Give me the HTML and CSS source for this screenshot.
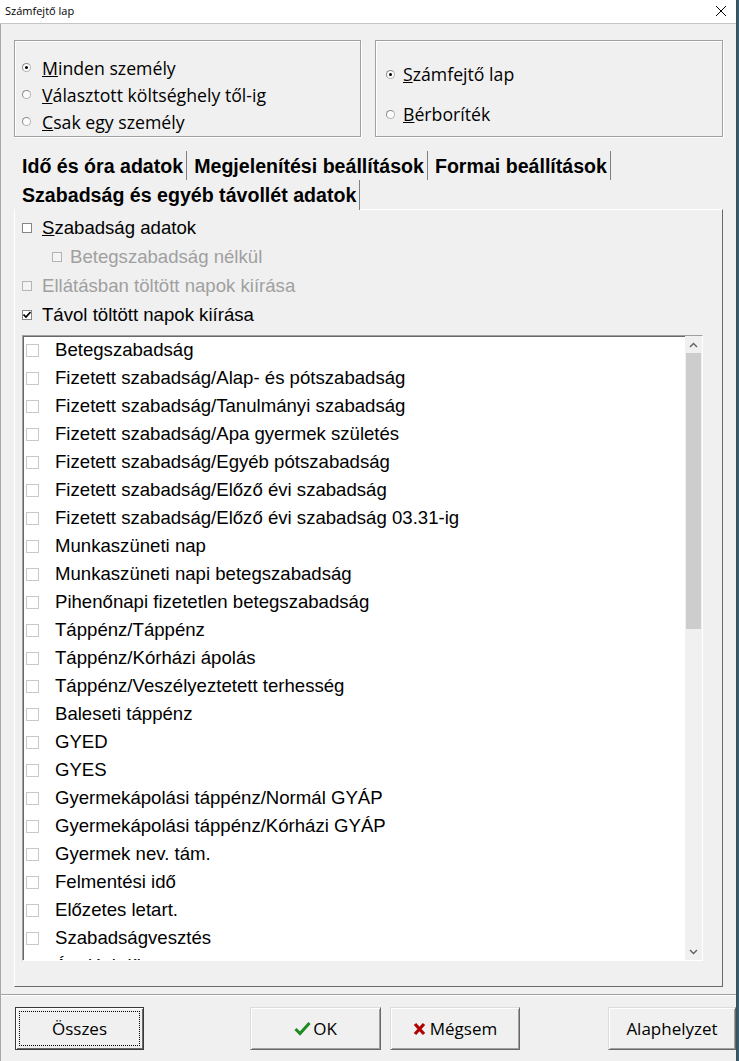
FILE: index.html
```html
<!DOCTYPE html>
<html lang="hu">
<head>
<meta charset="utf-8">
<title>Számfejtő lap</title>
<link rel="stylesheet" href="styles.css">
</head>
<body>
<div class="window">
  <div class="titlebar">
    <span class="title">Számfejtő lap</span>
    <svg class="close" width="12" height="12" viewBox="0 0 12 12"><path d="M1 1 L11 11 M11 1 L1 11" stroke="#000" stroke-width="1" fill="none"/></svg>
  </div>
  <div class="client">
    <div class="groups">
      <div class="group group-left">
        <div class="radio-row"><span class="radio checked"></span><span><u>M</u>inden személy</span></div>
        <div class="radio-row"><span class="radio"></span><span><u>V</u>álasztott költséghely től-ig</span></div>
        <div class="radio-row"><span class="radio"></span><span><u>C</u>sak egy személy</span></div>
      </div>
      <div class="group group-right">
        <div class="radio-row tall"><span class="radio checked"></span><span><u>S</u>zámfejtő lap</span></div>
        <div class="radio-row tall"><span class="radio"></span><span><u>B</u>érboríték</span></div>
      </div>
    </div>

    <div class="tabs">
      <div class="tab-row">
        <div class="tab first">Idő és óra adatok</div>
        <div class="tab">Megjelenítési beállítások</div>
        <div class="tab">Formai beállítások</div>
      </div>
      <div class="tab-row">
        <div class="tab first selected">Szabadság és egyéb távollét adatok</div>
      </div>
    </div>

    <div class="panel">
      <div class="check-row"><span class="cb"></span><span><u>S</u>zabadság adatok</span></div>
      <div class="check-row indent disabled"><span class="cb"></span><span>Betegszabadság nélkül</span></div>
      <div class="check-row disabled"><span class="cb"></span><span>Ellátásban töltött napok kiírása</span></div>
      <div class="check-row"><span class="cb"><svg width="8" height="8" viewBox="0 0 8 8"><path d="M0.5 3.5 L3 6 L7.5 1" stroke="#000" stroke-width="1.6" fill="none"/></svg></span><span>Távol töltött napok kiírása</span></div>

      <div class="listbox">
        <div class="items">
          <div class="item"><span class="lcb"></span>Betegszabadság</div>
          <div class="item"><span class="lcb"></span>Fizetett szabadság/Alap- és pótszabadság</div>
          <div class="item"><span class="lcb"></span>Fizetett szabadság/Tanulmányi szabadság</div>
          <div class="item"><span class="lcb"></span>Fizetett szabadság/Apa gyermek születés</div>
          <div class="item"><span class="lcb"></span>Fizetett szabadság/Egyéb pótszabadság</div>
          <div class="item"><span class="lcb"></span>Fizetett szabadság/Előző évi szabadság</div>
          <div class="item"><span class="lcb"></span>Fizetett szabadság/Előző évi szabadság 03.31-ig</div>
          <div class="item"><span class="lcb"></span>Munkaszüneti nap</div>
          <div class="item"><span class="lcb"></span>Munkaszüneti napi betegszabadság</div>
          <div class="item"><span class="lcb"></span>Pihenőnapi fizetetlen betegszabadság</div>
          <div class="item"><span class="lcb"></span>Táppénz/Táppénz</div>
          <div class="item"><span class="lcb"></span>Táppénz/Kórházi ápolás</div>
          <div class="item"><span class="lcb"></span>Táppénz/Veszélyeztetett terhesség</div>
          <div class="item"><span class="lcb"></span>Baleseti táppénz</div>
          <div class="item"><span class="lcb"></span>GYED</div>
          <div class="item"><span class="lcb"></span>GYES</div>
          <div class="item"><span class="lcb"></span>Gyermekápolási táppénz/Normál GYÁP</div>
          <div class="item"><span class="lcb"></span>Gyermekápolási táppénz/Kórházi GYÁP</div>
          <div class="item"><span class="lcb"></span>Gyermek nev. tám.</div>
          <div class="item"><span class="lcb"></span>Felmentési idő</div>
          <div class="item"><span class="lcb"></span>Előzetes letart.</div>
          <div class="item"><span class="lcb"></span>Szabadságvesztés</div>
          <div class="item"><span class="lcb"></span>Ápolási díj</div>
        </div>
        <div class="scrollbar">
          <div class="sb-btn"><svg width="9" height="6" viewBox="0 0 9 6"><path d="M1 5 L4.5 1.5 L8 5" stroke="#606060" stroke-width="1.4" fill="none"/></svg></div>
          <div class="sb-thumb"></div>
          <div class="sb-track"></div>
          <div class="sb-btn"><svg width="9" height="6" viewBox="0 0 9 6"><path d="M1 1 L4.5 4.5 L8 1" stroke="#606060" stroke-width="1.4" fill="none"/></svg></div>
        </div>
      </div>
    </div>

    <div class="separator"></div>

    <div class="buttons">
      <div class="btn default">Összes</div>
      <div class="btn btn-ok"><svg width="17" height="15" viewBox="0 0 17 15"><path d="M1.5 8 L6 12.5 L15.5 2" stroke="#1f8a1f" stroke-width="3" fill="none"/></svg>OK</div>
      <div class="btn btn-cancel"><svg width="13" height="14" viewBox="0 0 13 14"><path d="M2 2 L11 12 M11 2 L2 12" stroke="#b00000" stroke-width="3.2" fill="none"/></svg>Mégsem</div>
      <div class="btn btn-reset">Alaphelyzet</div>
    </div>
  </div>
</div>
</body>
</html>
```

FILE: styles.css
```css
* { box-sizing: border-box; }

html, body {
  margin: 0;
  padding: 0;
}

body {
  width: 739px;
  height: 1061px;
  overflow: hidden;
  background: #2f5f76;
  font-family: "Liberation Sans", Arial, sans-serif;
  color: #000;
}

.window {
  width: 737px;
  height: 1061px;
  background: #f0f0f0;
  border-right: 1px solid #4a4a4a;
  display: flex;
  flex-direction: column;
}

.titlebar {
  height: 24px;
  background: #fff;
  border-bottom: 1px solid #c4c4c4;
  display: flex;
  align-items: center;
  justify-content: space-between;
  padding: 0 9px 0 5px;
  font-family: "Open Sans", "Noto Sans", sans-serif;
  font-size: 11px;
}

.title { margin-top: -3px; }

.close { margin-top: -1px; }

.client {
  flex: 1;
  border-left: 1px solid #a8a8a8;
  display: flex;
  flex-direction: column;
}

.groups {
  display: flex;
  gap: 14px;
  padding: 16px 0 0 13px;
}

.group {
  height: 97px;
  border: 1px solid #a0a0a0;
  box-shadow: inset 1px 1px 0 #fff, 1px 1px 0 #fff;
  padding-top: 13px;
  font-family: "Open Sans", "Noto Sans", sans-serif;
  font-size: 17.7px;
}

.group-left { width: 347px; padding-left: 7px; }
.group-right { width: 348px; padding-left: 10px; }

.radio-row {
  height: 27px;
  display: flex;
  align-items: center;
  gap: 11px;
  white-space: nowrap;
}

.radio-row.tall { height: 40px; gap: 8px; }

.radio {
  width: 9px;
  height: 9px;
  border-radius: 50%;
  border: 1px solid #b4b4b4;
  border-top-color: #8c8c8c;
  border-left-color: #8c8c8c;
  background: #fcfcfc;
  display: flex;
  align-items: center;
  justify-content: center;
  flex: none;
}

.radio.checked::after {
  content: "";
  width: 3px;
  height: 3px;
  border-radius: 50%;
  background: #000;
}

.tabs {
  margin-top: 14px;
  padding-left: 14px;
  font-weight: bold;
  font-size: 19.6px;
}

.tab-row {
  display: flex;
  height: 29px;
}

.tab {
  height: 29px;
  padding: 2px 3px 0 7px;
  border-right: 1px solid #808080;
  display: flex;
  align-items: center;
  white-space: nowrap;
}

.tab.first { padding-left: 7px; }

.tab.selected {
  position: relative;
  z-index: 1;
  background: #f0f0f0;
  height: 30px;
  padding-bottom: 1px;
}

.panel {
  margin-left: 13px;
  width: 709px;
  height: 778px;
  border: 1px solid;
  border-color: #fff #696969 #696969 #fff;
  padding: 3px 0 0 7px;
  font-size: 18.6px;
}

.check-row {
  height: 29px;
  display: flex;
  align-items: center;
  gap: 10px;
  white-space: nowrap;
}

.check-row.indent { padding-left: 30px; gap: 8px; }

.check-row.disabled { color: #a0a0a0; }

.cb {
  width: 10px;
  height: 10px;
  border: 1px solid #858585;
  background: #fff;
  flex: none;
  display: flex;
  align-items: center;
  justify-content: center;
}

.check-row.disabled .cb { border-color: #b4b4b4; background: #f4f4f4; }

.listbox {
  margin-top: 6px;
  width: 681px;
  height: 626px;
  border: 1px solid;
  border-color: #a0a0a0 #fff #fff #a0a0a0;
  box-shadow: inset 1px 1px 0 #696969;
  background: #fff;
  display: flex;
  overflow: hidden;
}

.items {
  flex: 1;
  overflow: hidden;
  padding-left: 3px;
}

.item {
  height: 28px;
  display: flex;
  align-items: center;
  gap: 16px;
  white-space: nowrap;
}

.lcb {
  width: 13px;
  height: 13px;
  border: 1px solid #c8c8c8;
  background: #fff;
  flex: none;
}

.scrollbar {
  width: 17px;
  background: #f0f0f0;
  display: flex;
  flex-direction: column;
}

.sb-btn {
  height: 17px;
  display: flex;
  align-items: center;
  justify-content: center;
  flex: none;
}

.sb-thumb {
  height: 276px;
  margin: 0 1px;
  background: #cdcdcd;
  flex: none;
}

.sb-track { flex: 1; }

.separator {
  margin-top: 7px;
  height: 2px;
  border-top: 1px solid #a0a0a0;
  border-bottom: 1px solid #fff;
}

.buttons {
  margin-top: 11px;
  display: flex;
  font-family: "Open Sans", "Noto Sans", sans-serif;
  font-size: 17px;
}

.btn {
  height: 43px;
  display: flex;
  align-items: center;
  justify-content: center;
  gap: 2px;
  background: #f0f0f0;
  border: 1px solid;
  border-color: #dcdcdc #696969 #696969 #dcdcdc;
  box-shadow: inset 1px 1px 0 #fff, inset -1px -1px 0 #a0a0a0;
  position: relative;
}

.btn.default {
  margin-left: 14px;
  width: 129px;
  border: 1px solid #3a3a3a;
  box-shadow: inset 1px 1px 0 #fff, inset -1px -1px 0 #696969;
}

.btn.default::after {
  content: "";
  position: absolute;
  inset: 3px;
  border: 1px dotted #000;
}

.btn-ok { margin-left: 106px; width: 131px; }
.btn-cancel { margin-left: 9px; width: 130px; gap: 4px; }
.btn-reset { margin-left: 88px; width: 128px; }
```
